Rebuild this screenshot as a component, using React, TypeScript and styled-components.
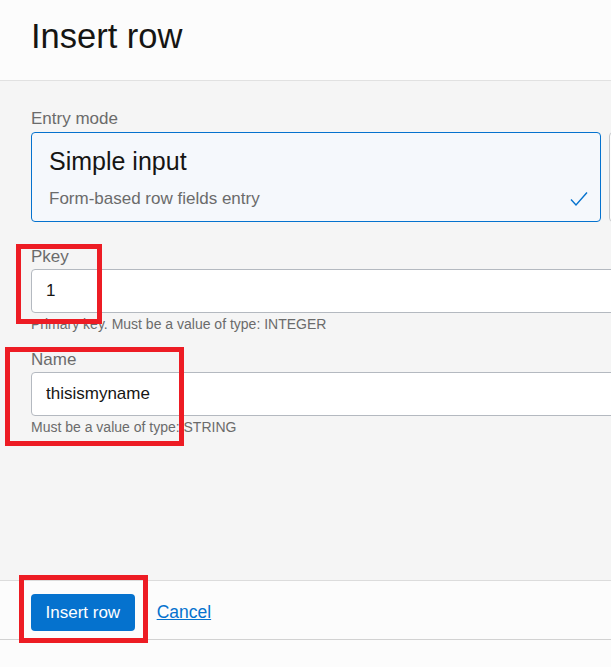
import styled, { createGlobalStyle } from 'styled-components'

const GlobalStyle = createGlobalStyle`
    html, body {
        margin: 0;
        padding: 0;
        background: #fcfcfc;
        font-family: "Liberation Sans", Arial, sans-serif;
        color: #161513;
    }
    * {
        box-sizing: border-box;
    }
`

const Page = styled.div`
    position: relative;
    width: 611px;
    height: 667px;
    overflow: hidden;
    background: #fcfcfc;
`

const Header = styled.header`
    height: 81px;
    padding: 17px 31px 0;
    border-bottom: 1px solid #e1e1e1;
    background: #fcfcfc;
`

const Title = styled.h1`
    margin: 0;
    font-size: 34.5px;
    line-height: 39px;
    font-weight: 400;
    color: #161513;
`

const Body = styled.main`
    height: 499px;
    padding: 28px 0 0 31px;
    background: #f5f5f5;
`

const Column = styled.div`
    width: 1148px;
    display: flex;
    flex-direction: column;
`

const Label = styled.div`
    font-size: 17px;
    line-height: 20px;
    color: #6b6b6b;
`

const CardRow = styled.div`
    display: flex;
    gap: 8px;
    margin-top: 3px;
`

const Card = styled.div<{ $selected?: boolean }>`
    width: 570px;
    height: 90px;
    flex-shrink: 0;
    padding: 14px 12px 13px 17px;
    border: 1px solid ${p => (p.$selected ? '#0572ce' : '#c4c6ca')};
    border-radius: 4px;
    background: ${p => (p.$selected ? '#f5f8fc' : '#fcfcfc')};
    display: flex;
    flex-direction: column;
    gap: 13px;
`

const CardTitle = styled.div`
    font-size: 25px;
    line-height: 29px;
    color: #161513;
`

const CardDescRow = styled.div`
    display: flex;
    align-items: center;
    justify-content: space-between;
`

const CardDesc = styled.div`
    font-size: 17px;
    line-height: 20px;
    color: #6b6b6b;
`

const Field = styled.div<{ $gap: number }>`
    display: flex;
    flex-direction: column;
    margin-top: ${p => p.$gap}px;
`

const Input = styled.input`
    margin-top: 2px;
    height: 44px;
    width: 100%;
    padding: 0 14px;
    border: 1px solid #b4b9c0;
    border-radius: 4px;
    background: #ffffff;
    font-family: "Liberation Sans", Arial, sans-serif;
    font-size: 17px;
    color: #161513;
    outline: none;
`

const Help = styled.div`
    margin-top: 2px;
    font-size: 14px;
    line-height: 18px;
    color: #6b6b6b;
`

const Footer = styled.footer`
    height: 60px;
    padding: 13px 31px 0;
    border-top: 1px solid #dcdcdc;
    border-bottom: 1px solid #d2d2d2;
    background: #fcfcfc;
    display: flex;
    align-items: flex-start;
    gap: 22px;
`

const PrimaryButton = styled.button`
    height: 37px;
    padding: 0 14.5px;
    border: none;
    border-radius: 4px;
    background: #0572ce;
    color: #ffffff;
    font-family: "Liberation Sans", Arial, sans-serif;
    font-size: 17px;
    cursor: pointer;
`

const LinkButton = styled.a`
    height: 37px;
    display: flex;
    align-items: center;
    font-size: 17.5px;
    color: #0572ce;
    text-decoration: underline;
    cursor: pointer;
`

const Mark = styled.div<{ $x: number; $y: number; $w: number; $h: number }>`
    position: absolute;
    left: ${p => p.$x}px;
    top: ${p => p.$y}px;
    width: ${p => p.$w}px;
    height: ${p => p.$h}px;
    border: 5px solid #ed1c24;
    pointer-events: none;
`

const CheckIcon = () => (
    <svg width="18" height="16" viewBox="0 0 18 16" fill="none">
        <polyline points="1,8.5 6,14 17,1.5" stroke="#0572ce" strokeWidth="1.4" />
    </svg>
)

export default function App() {
    return (
        <Page>
            <GlobalStyle />
            <Header>
                <Title>Insert row</Title>
            </Header>
            <Body>
                <Column>
                    <Label>Entry mode</Label>
                    <CardRow>
                        <Card $selected>
                            <CardTitle>Simple input</CardTitle>
                            <CardDescRow>
                                <CardDesc>Form-based row fields entry</CardDesc>
                                <CheckIcon />
                            </CardDescRow>
                        </Card>
                        <Card />
                    </CardRow>
                    <Field $gap={25}>
                        <Label>Pkey</Label>
                        <Input defaultValue="1" />
                        <Help>Primary key. Must be a value of type: INTEGER</Help>
                    </Field>
                    <Field $gap={17}>
                        <Label>Name</Label>
                        <Input defaultValue="thisismyname" />
                        <Help>Must be a value of type: STRING</Help>
                    </Field>
                </Column>
            </Body>
            <Footer>
                <PrimaryButton>Insert row</PrimaryButton>
                <LinkButton>Cancel</LinkButton>
            </Footer>
            <Mark $x={16} $y={244} $w={86} $h={80} />
            <Mark $x={5} $y={347} $w={179} $h={99} />
            <Mark $x={19} $y={575} $w={129} $h={68} />
        </Page>
    )
}
